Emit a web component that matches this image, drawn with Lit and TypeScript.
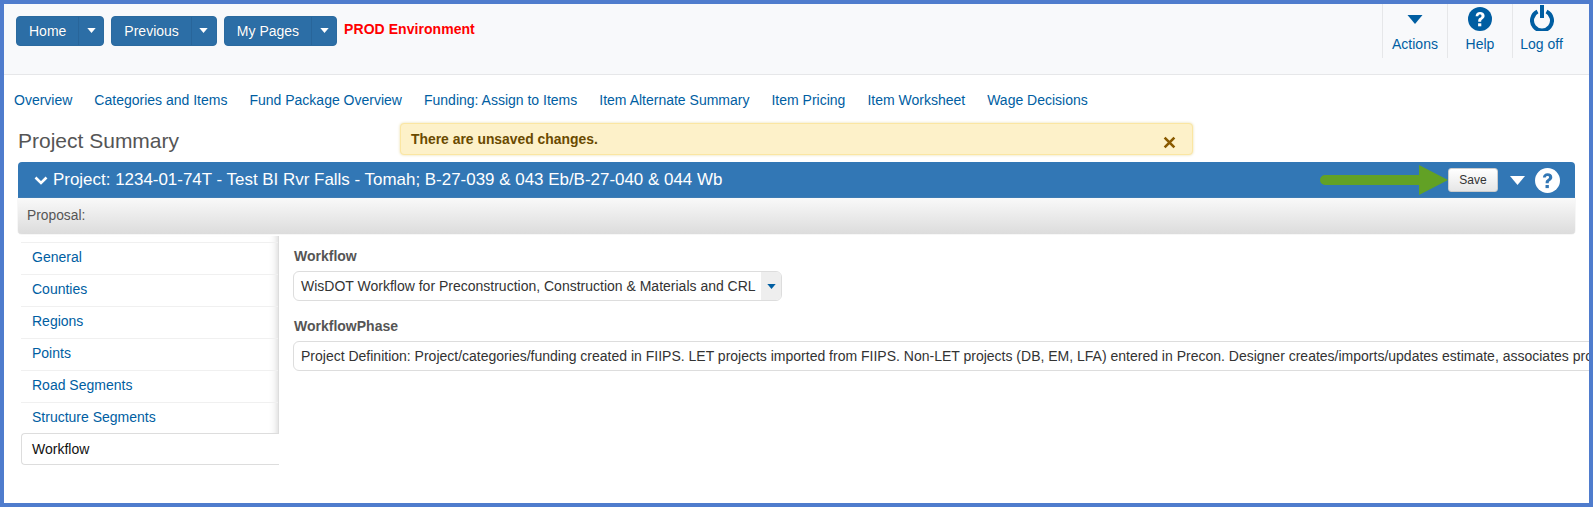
import { LitElement, html, css } from "lit";
import { customElement } from "lit/decorators.js";

const caret = (w: number, h: number, c: string) => html`<svg width=${w} height=${h} viewBox="0 0 10 6"><path d="M0 0H10L5 6Z" fill=${c}></path></svg>`;
const help = (size: number, bg: string, fg: string) => html`<svg width=${size} height=${size} viewBox="0 0 24 24"><circle cx="12" cy="12" r="12" fill=${bg}></circle><path d="M7.6 9.2C7.7 6.5 9.5 5 12.1 5c2.600 0 4.500 1.500 4.500 3.800 0 1.700-.9 2.600-2.100 3.400-1 .7-1.300 1.100-1.300 2.100v.4h-3v-.7c0-1.600.6-2.400 1.800-3.200 1-.7 1.500-1.100 1.500-1.900 0-.8-.6-1.300-1.500-1.300-1 0-1.600.6-1.700 1.600Z" fill=${fg}></path><rect x="10.100" y="16.300" width="3.200" height="3" fill=${fg}></rect></svg>`;

@customElement("app-root")
export class AppRoot extends LitElement {
  static styles = css`
    :host { display: block; box-sizing: border-box; width: 1593px; height: 507px; border: 4px solid #4f7ccd; background: #fff; overflow: hidden; position: relative; font-family: "Liberation Sans", Arial, sans-serif; font-size: 14px; color: #333; }
    * { box-sizing: border-box; }
    a { color: #005ea2; text-decoration: none; }
    .top { height: 71px; background: #f8f9fb; border-bottom: 1px solid #e6e7e9; display: flex; justify-content: space-between; padding-left: 12px; }
    .btns { display: flex; gap: 7px; padding-top: 12px; align-items: flex-start; }
    .split { display: flex; height: 30px; background: #2c6ea6; border: 1px solid #2b6a9f; border-radius: 4px; color: #fff; line-height: 28px; text-shadow: 0 0 1px rgba(0,0,0,.2); }
    .split .l { padding: 0 12px; }
    .split .r { width: 25px; border-left: 1px solid #28659a; display: flex; align-items: center; justify-content: center; padding-bottom: 1px; }
    .env { color: #f00; font-weight: 700; font-size: 14px; letter-spacing: .05px; margin-left: 0; line-height: 26px; }
    .tools { display: flex; height: 54px; margin-right: 19px; }
    .tool { border-left: 1px solid #e6e7e9; display: flex; flex-direction: column; align-items: center; width: 65px; color: #005ea2; }
    .tool .ic { height: 30px; display: flex; align-items: center; justify-content: center; }
    .tool .ic.power { align-items: flex-start; padding-top: 1px; }
    .tool span { line-height: 20px; }
    .tool.last { width: 58px; }
    .tabs { display: flex; gap: 22px; padding: 15px 0 0 10px; height: 40px; line-height: 20px; }
    h1 { margin: 0; font-weight: 400; font-size: 21px; color: #555; line-height: 24px; padding: 14px 0 0 14px; height: 47px; }
    .panel { margin: 0 14px; width: 1557px; }
    .phead { height: 36px; background: #3277b5; border-radius: 4px 4px 0 0; display: flex; align-items: center; color: #fff; font-size: 16.950px; padding-left: 16px; }
    .phead .t { margin-left: 5px; flex: 1; }
    .psub { height: 36px; background: linear-gradient(#f9f9f9, #dcdcdc); border-radius: 0 0 4px 4px; box-shadow: 0 0 1px #aaa; padding-left: 9px; line-height: 36px; font-size: 13.800px; color: #555; }
    .save { height: 24px; width: 50px; background: linear-gradient(#fff, #e6e6e6); border: 1px solid #ccc; border-radius: 3px; color: #333; font-size: 12px; line-height: 22px; text-align: center; margin-right: 2px; }
    .acts { display: flex; align-items: center; gap: 9px; margin-right: 15px; }
    .body { display: flex; }
    .side { width: 258px; margin-left: 17px; padding-top: 2px; flex: none; }
    .list { height: 198px; padding-top: 6px; box-shadow: inset -8px 0 8px -8px #ccc; border-right: 1px solid #ddd; }
    .item { height: 32px; line-height: 29px; padding-left: 11px; border-top: 1px solid #f0f0f0; }
    .active { height: 32px; line-height: 30px; margin-top: -1px; padding-left: 10px; border: 1px solid #ddd; border-right: 0; border-radius: 4px 0 0 4px; color: #111; background: #fff; }
    .main { flex: 1; padding: 12px 0 0 14px; min-width: 0; }
    label { display: block; font-weight: 700; color: #555; line-height: 20px; padding-left: 1px; }
    .sel { margin-top: 5px; height: 30px; border: 1px solid #ddd; border-radius: 6px; display: flex; line-height: 28px; padding-left: 7px; color: #333; overflow: hidden; white-space: nowrap; }
    .sel.w { width: 489px; margin-bottom: 15px; }
    .sel.w div:first-child { flex: 1; }
    .sel .dd { width: 20px; background: #eee; display: flex; align-items: center; justify-content: center; }
    .sel.long { width: 1320px; }
    .alert { position: absolute; left: 396px; top: 119px; width: 793px; height: 32px; background: #fdf1c9; border: 1px solid #fbe6a2; border-radius: 4px; box-shadow: 0 0 3px #e9dca8; color: #6a4a00; font-weight: 700; font-size: 13.900px; line-height: 30px; padding-left: 10px; }
    .alert svg { position: absolute; right: 16px; top: 12px; }
    .arrow { position: absolute; left: 1316px; top: 161px; }
  `;

  render() {
    const tabs = ["Overview", "Categories and Items", "Fund Package Overview", "Funding: Assign to Items", "Item Alternate Summary", "Item Pricing", "Item Worksheet", "Wage Decisions"];
    const items = ["General", "Counties", "Regions", "Points", "Road Segments", "Structure Segments"];
    return html`
      <div class="top">
        <div class="btns">
          ${["Home", "Previous", "My Pages"].map((b) => html`<div class="split"><div class="l">${b}</div><div class="r">${caret(9, 5, "#fff")}</div></div>`)}
          <div class="env">PROD Environment</div>
        </div>
        <div class="tools">
          <div class="tool"><div class="ic">${caret(16, 9, "#005ea2")}</div><span>Actions</span></div>
          <div class="tool"><div class="ic">${help(24, "#005ea2", "#fff")}</div><span>Help</span></div>
          <div class="tool last"><div class="ic power"><svg width="24" height="26" viewBox="0 0 24 26"><path d="M7.500 6.500A10 10 0 1 0 16.500 6.500" fill="none" stroke="#005ea2" stroke-width="4"></path><rect x="10" y="0" width="4" height="13" fill="#005ea2"></rect></svg></div><span>Log off</span></div>
        </div>
      </div>
      <div class="tabs">${tabs.map((t) => html`<a>${t}</a>`)}</div>
      <h1>Project Summary</h1>
      <div class="panel">
        <div class="phead">
          <svg width="14" height="9" viewBox="0 0 14 9"><path d="M1.500 1.500L7 7L12.500 1.500" fill="none" stroke="#fff" stroke-width="2.600"></path></svg>
          <div class="t">Project: 1234-01-74T - Test BI Rvr Falls - Tomah; B-27-039 &amp; 043 Eb/B-27-040 &amp; 044 Wb</div>
          <div class="acts"><div class="save">Save</div>${caret(17, 9, "#fff")}${help(25, "#fff", "#3277b5")}</div>
        </div>
        <div class="psub">Proposal:</div>
      </div>
      <div class="body">
        <div class="side">
          <div class="list">${items.map((i) => html`<div class="item"><a>${i}</a></div>`)}</div>
          <div class="active">Workflow</div>
        </div>
        <div class="main">
          <label>Workflow</label>
          <div class="sel w"><div>WisDOT Workflow for Preconstruction, Construction &amp; Materials and CRL</div><div class="dd">${caret(9, 5, "#005ea2")}</div></div>
          <label>WorkflowPhase</label>
          <div class="sel long">Project Definition: Project/categories/funding created in FIIPS. LET projects imported from FIIPS. Non-LET projects (DB, EM, LFA) entered in Precon. Designer creates/imports/updates estimate, associates project to contract and more</div>
        </div>
      </div>
      <div class="alert">There are unsaved changes.<svg width="13" height="13" viewBox="0 0 12 12"><path d="M1.500 1.500L10.500 10.500M10.500 1.500L1.500 10.500" stroke="#8a5a00" stroke-width="2.400"></path></svg></div>
      <svg class="arrow" width="128" height="30" viewBox="0 0 128 30"><path d="M5 10H99V0L128 15L99 30V20H5a5 5 0 0 1 0-10Z" fill="#62a125"></path></svg>
    `;
  }
}
